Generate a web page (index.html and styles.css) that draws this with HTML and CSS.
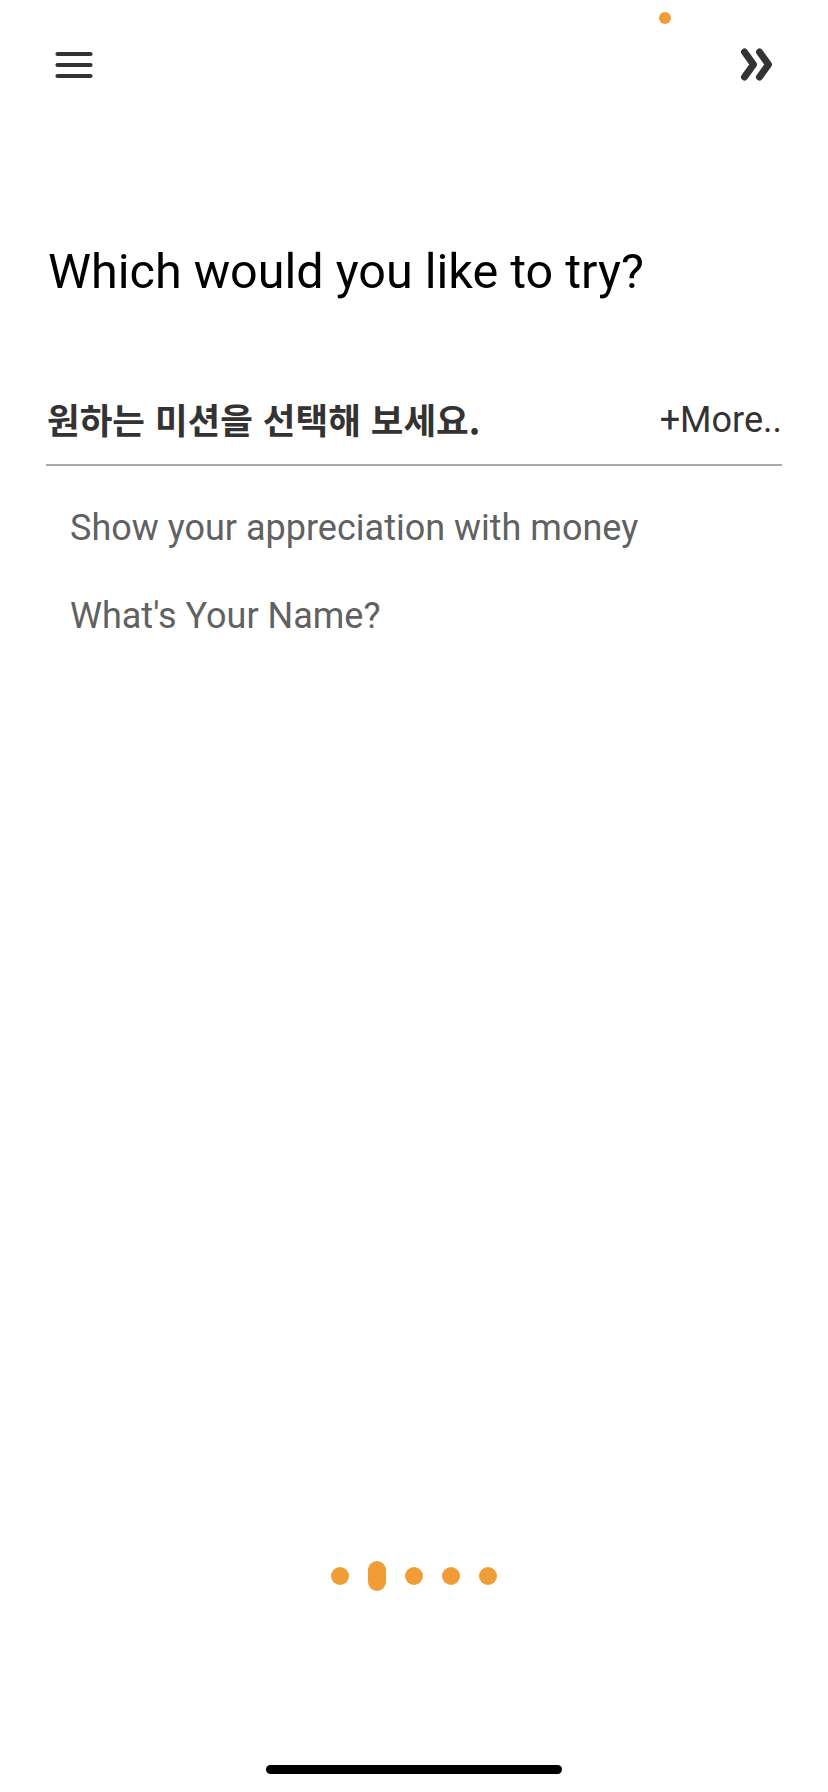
FILE: index.html
```html
<!DOCTYPE html>
<html lang="ko">
<head>
<meta charset="utf-8">
<link rel="stylesheet" href="styles.css">
</head>
<body>
<div class="screen">
  <span class="status-dot"></span>
  <header class="topbar">
    <button class="icon-btn menu" aria-label="menu">
      <svg width="38" height="30" viewBox="0 0 38 30"><g stroke="#333" stroke-width="4.2" stroke-linecap="round"><line x1="2.5" y1="4" x2="35.5" y2="4"/><line x1="2.5" y1="15" x2="35.5" y2="15"/><line x1="2.5" y1="26" x2="35.5" y2="26"/></g></svg>
    </button>
    <button class="icon-btn skip" aria-label="skip">
      <svg width="34" height="33" viewBox="0 0 34 33"><g fill="none" stroke="#333" stroke-width="7" stroke-linecap="round" stroke-linejoin="round"><polyline points="4.5,4 13.5,16.5 4.5,29"/><polyline points="19.5,4 28.5,16.5 19.5,29"/></g></svg>
    </button>
  </header>
  <main class="content">
    <h1 class="title">Which would you like to try?</h1>
    <div class="section-head">
      <span class="section-title">원하는 미션을 선택해 보세요.</span>
      <span class="more">+More..</span>
    </div>
    <ul class="missions">
      <li>Show your appreciation with money</li>
      <li>What's Your Name?</li>
    </ul>
  </main>
  <nav class="pager">
    <span class="dot"></span>
    <span class="dot active"></span>
    <span class="dot"></span>
    <span class="dot"></span>
    <span class="dot"></span>
  </nav>
  <div class="home-bar"></div>
</div>
</body>
</html>
```

FILE: styles.css
```css
* { box-sizing: border-box; }
html, body { margin: 0; padding: 0; background: #fff; }
body { font-family: Roboto, "Noto Sans CJK KR", sans-serif; }

.screen {
  position: relative;
  width: 828px;
  height: 1792px;
  display: flex;
  flex-direction: column;
  overflow: hidden;
}

.status-dot {
  position: absolute;
  left: 659px;
  top: 12px;
  width: 12px;
  height: 12px;
  border-radius: 50%;
  background: #f09d38;
}

.topbar {
  display: flex;
  justify-content: space-between;
  align-items: center;
  padding: 48px 54px 0 55px;
  height: 81px;
}
.icon-btn {
  border: 0;
  background: none;
  padding: 0;
  display: block;
  line-height: 0;
}

.content {
  padding: 0 46px;
  flex: 1;
}

.title {
  margin: 162px 0 0 2px;
  font-weight: 400;
  font-size: 48.5px;
  line-height: 58px;
  color: #000;
}

.section-head {
  margin-top: 75px;
  display: flex;
  justify-content: space-between;
  align-items: center;
  height: 90px;
  border-bottom: 2px solid #ababab;
}
.section-title {
  font-family: "Noto Sans CJK KR", sans-serif;
  font-weight: 700;
  font-size: 35.5px;
  color: #333;
  padding-left: 1px;
  margin-top: -4px;
}
.more {
  font-size: 36px;
  color: #333;
  padding-right: 0;
}

.missions {
  list-style: none;
  margin: 40px 0 0;
  padding: 0 0 0 24px;
}
.missions li {
  font-size: 36px;
  line-height: 44px;
  color: #616161;
  margin-bottom: 44px;
}

.pager {
  display: flex;
  justify-content: center;
  align-items: center;
  gap: 19px;
  height: 30px;
  margin-bottom: 201px;
}
.dot {
  width: 18px;
  height: 18px;
  border-radius: 9px;
  background: #f09d38;
}
.dot.active { height: 30px; }

.home-bar {
  position: absolute;
  left: 266px;
  top: 1765px;
  width: 296px;
  height: 9px;
  border-radius: 5px;
  background: #000;
}
```
